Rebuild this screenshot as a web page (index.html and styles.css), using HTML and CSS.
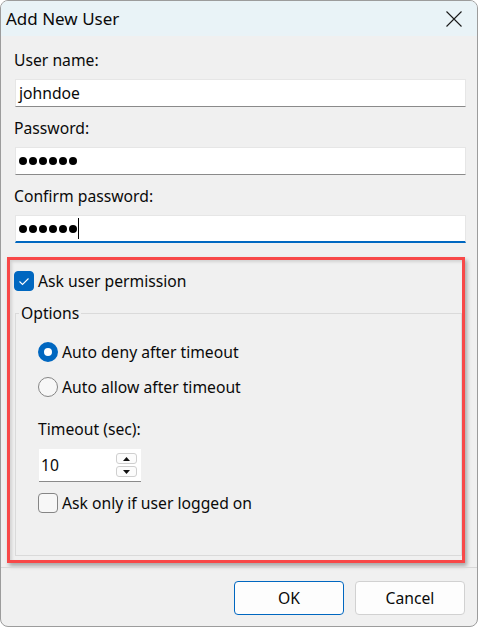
FILE: index.html
```html
<!DOCTYPE html>
<html lang="en">
<head>
    <meta charset="UTF-8">
    <meta name="viewport" content="width=device-width, initial-scale=1.0">
    <title>Add New User</title>
    <link rel="stylesheet" href="styles.css">
</head>
<body>
    <div class="dialog">
        <div class="titlebar">
            <span class="title">Add New User</span>
            <svg class="close-icon" width="16" height="16" viewBox="0 0 16 16">
                <path d="M0.5 0.5 L15.5 15.5 M15.5 0.5 L0.5 15.5" stroke="#1a1a1a" stroke-width="1.1" fill="none"/>
            </svg>
        </div>

        <div class="content">
            <div class="field">
                <div class="label">User name:</div>
                <div class="textbox">johndoe</div>
            </div>
            <div class="field">
                <div class="label">Password:</div>
                <div class="textbox">
                    <span class="dots"><i></i><i></i><i></i><i></i><i></i><i></i></span>
                </div>
            </div>
            <div class="field">
                <div class="label">Confirm password:</div>
                <div class="textbox focused">
                    <span class="dots"><i></i><i></i><i></i><i></i><i></i><i></i></span>
                    <span class="caret"></span>
                </div>
            </div>

            <!-- annotated region -->
            <div class="highlight">
                <div class="check-row">
                    <span class="checkbox checked">
                        <svg width="18" height="18" viewBox="0 0 18 18">
                            <polyline points="4.5,9.5 7.5,12.5 13.5,6.5" stroke="#fff" stroke-width="1.1" fill="none"/>
                        </svg>
                    </span>
                    <span>Ask user permission</span>
                </div>

                <fieldset class="group">
                    <legend>Options</legend>
                    <div class="group-body">
                        <div class="check-row">
                            <span class="radio selected"></span>
                            <span>Auto deny after timeout</span>
                        </div>
                        <div class="check-row second">
                            <span class="radio"></span>
                            <span>Auto allow after timeout</span>
                        </div>
                        <div class="label timeout-label">Timeout (sec):</div>
                        <div class="spinbox">
                            <span>10</span>
                            <div class="spin-buttons">
                                <span class="spin-btn">
                                    <svg width="7" height="4" viewBox="0 0 7 4"><polygon points="0,4 7,4 3.5,0" fill="#111"/></svg>
                                </span>
                                <span class="spin-btn">
                                    <svg width="7" height="4" viewBox="0 0 7 4"><polygon points="0,0 7,0 3.5,4" fill="#111"/></svg>
                                </span>
                            </div>
                        </div>
                        <div class="check-row logged-on">
                            <span class="checkbox"></span>
                            <span>Ask only if user logged on</span>
                        </div>
                    </div>
                </fieldset>
            </div>
        </div>

        <div class="footer">
            <button class="btn btn-primary">OK</button>
            <button class="btn">Cancel</button>
        </div>
    </div>
</body>
</html>
```

FILE: styles.css
```css
body {
    margin: 0;
    background-color: #ffffff;
    font-family: "Noto Sans", "Open Sans", sans-serif;
    font-size: 15.7px;
    color: #0a0a0a;
}
.dialog {
    width: 476px;
    height: 625px;
    border: 1px solid #9c9c9c;
    border-radius: 8px;
    background-color: #f0f0f0;
    overflow: hidden;
    display: flex;
    flex-direction: column;
}
.titlebar {
    height: 35px;
    flex: none;
    background-color: #e9f3f7;
    display: flex;
    align-items: center;
    justify-content: space-between;
    padding: 0 15px 0 5px;
}
.title {
    font-size: 17px;
}
.content {
    padding: 14px 11px 0 13px;
}
.label {
    line-height: 20px;
    margin-bottom: 9px;
}
.field {
    margin-bottom: 11px;
}
.field:nth-child(3) {
    margin-bottom: 0;
}
.textbox {
    margin-left: 1px;
    height: 28px;
    box-sizing: border-box;
    background-color: #ffffff;
    border: 1px solid #e6e6e6;
    border-bottom-color: #8a8a8a;
    padding: 0 3px;
    display: flex;
    align-items: center;
}
.textbox.focused {
    border-bottom: 2px solid #0067c0;
}
.dots {
    display: flex;
    gap: 2px;
}
.dots i {
    width: 8px;
    height: 8px;
    border-radius: 50%;
    background-color: #000;
}
.caret {
    width: 1px;
    height: 21px;
    margin-left: 1px;
    background-color: #000;
}
.highlight {
    margin: 14px 0 0 -7px;
    width: 458px;
    box-sizing: border-box;
    border: 3px solid #f84848;
    padding: 11px 0 4px 4px;
    box-shadow: 2px 3px 4px rgba(0, 0, 0, 0.3), inset 2px 2px 3px rgba(0, 0, 0, 0.12);
}
.check-row {
    display: flex;
    align-items: center;
    gap: 4px;
    height: 20px;
}
.checkbox {
    width: 20px;
    height: 20px;
    box-sizing: border-box;
    border: 1px solid #858585;
    border-radius: 4px;
    background-color: #f7f7f7;
    display: flex;
    align-items: center;
    justify-content: center;
}
.checkbox.checked {
    background-color: #0067c0;
    border-color: #0067c0;
}
.group {
    margin: 12px 0 0 1px;
    padding: 0;
    border: 1px solid #dadada;
    min-width: 0;
}
.group legend {
    margin-left: 3px;
    padding: 0 2px;
    line-height: 20px;
}
.group-body {
    padding: 19px 0 42px 22px;
}
.radio {
    width: 20px;
    height: 20px;
    box-sizing: border-box;
    border: 1px solid #858585;
    border-radius: 50%;
    background-color: #f7f7f7;
}
.radio.selected {
    border: 6px solid #0067c0;
    background-color: #ffffff;
}
.check-row.second {
    margin-top: 15px;
}
.timeout-label {
    margin: 22px 0 0;
}
.spinbox {
    margin: 10px 0 0 1px;
    width: 102px;
    height: 33px;
    box-sizing: border-box;
    background-color: #ffffff;
    border-bottom: 1px solid #8a8a8a;
    padding: 0 4px 0 2px;
    display: flex;
    align-items: center;
}
.spin-buttons {
    margin-left: auto;
    display: flex;
    flex-direction: column;
    gap: 2px;
}
.spin-btn {
    width: 21px;
    height: 11px;
    box-sizing: border-box;
    border: 1px solid #cfcfcf;
    border-radius: 3px;
    background-color: #fcfcfc;
    display: flex;
    align-items: center;
    justify-content: center;
}
.check-row.logged-on {
    margin-top: 11px;
}
.footer {
    margin-top: 4px;
    border-top: 1px solid #d8d8d8;
    padding: 13px 12px 0 0;
    display: flex;
    justify-content: flex-end;
    gap: 11px;
}
.btn {
    width: 110px;
    height: 34px;
    border: 1px solid #d1d1d1;
    border-radius: 4px;
    background-color: #fdfdfd;
    font-family: inherit;
    font-size: 15.7px;
    color: #0a0a0a;
    padding: 0;
}
.btn-primary {
    border-color: #0067c0;
}
```
